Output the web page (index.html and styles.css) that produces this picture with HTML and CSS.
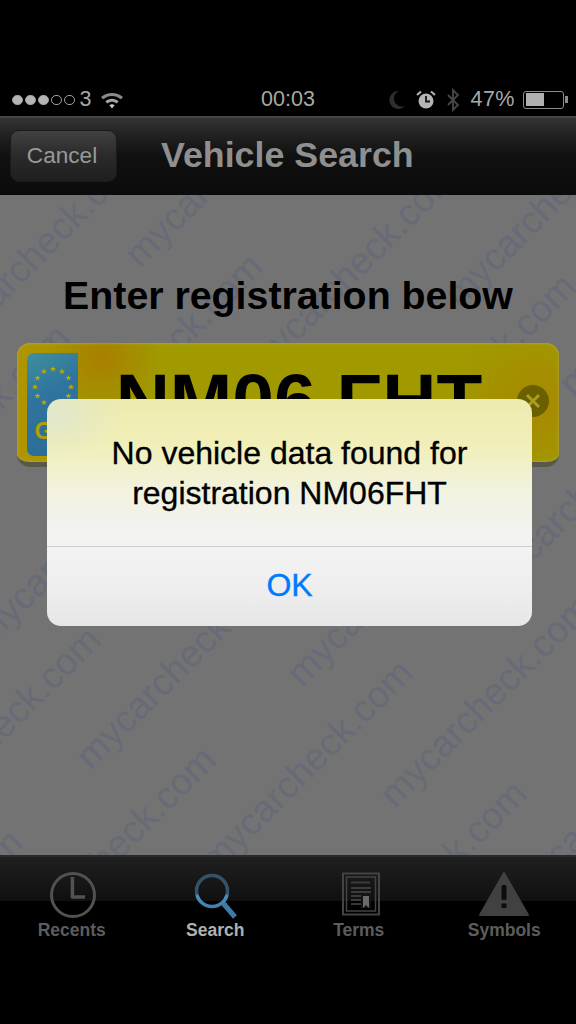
FILE: index.html
```html
<!DOCTYPE html>
<html lang="en">
<head>
<meta charset="utf-8">
<title>Vehicle Search</title>
<link rel="stylesheet" href="styles.css">
</head>
<body>
<div class="screen">
  <div class="topgap"></div>
  <div class="status">
    <div class="status-left">
      <span class="sig"><i class="dot on"></i><i class="dot on"></i><i class="dot on"></i><i class="dot"></i><i class="dot"></i></span>
      <span class="carrier">3</span>
      <svg class="wifi" width="22" height="18" viewBox="0 0 22 18"><path d="M0 6C6 .5 16 .5 22 6L19.800 8.300C14.800 3.800 7.200 3.800 2.200 8.300Z" fill="#8a8a8a"/><path d="M4.300 10.300C8.200 6.900 13.800 6.900 17.700 10.300L15.600 12.500C12.800 10.200 9.200 10.200 6.400 12.500Z" fill="#a5a5a5"/><path d="M8.400 14.300C10 13 12 13 13.600 14.300L11 17.500Z" fill="#c8c8c8"/></svg>
    </div>
    <div class="time">00:03</div>
    <div class="status-right">
      <svg width="18" height="20" viewBox="0 0 18 20"><path d="M11 1A9 9 0 1 0 17 16A8 8 0 0 1 11 1Z" fill="#2e2e2e"/></svg>
      <svg class="alarm" width="20" height="20" viewBox="0 0 20 20"><circle cx="10" cy="11" r="7.500" fill="#b5b5b5"/><path d="M10 6V11.500H14" fill="none" stroke="#111" stroke-width="1.800"/><path d="M1 5L5 1.500M19 5L15 1.500" stroke="#b5b5b5" stroke-width="2"/></svg>
      <svg class="bt" width="14" height="24" viewBox="0 0 14 24"><path d="M2 7L12 17L7 22V2L12 7L2 17" fill="none" stroke="#474747" stroke-width="1.800"/></svg>
      <span class="pct">47%</span>
      <span class="battery"><span class="battery-fill"></span></span>
    </div>
  </div>
  <div class="nav">
    <button class="cancel">Cancel</button>
    <h1 class="title">Vehicle Search</h1>
  </div>
  <main class="content">
    <svg class="watermark" width="576" height="660" viewBox="0 195 576 660">
      <g class="wm">
        <text transform="translate(147 159) rotate(-45)">mycarcheck.com</text>
        <text transform="translate(265 269) rotate(-45)">mycarcheck.com</text>
        <text transform="translate(383 379) rotate(-45)">mycarcheck.com</text>
        <text transform="translate(501 489) rotate(-45)">mycarcheck.com</text>
        <text transform="translate(594 610) rotate(-45)">mycarcheck.com</text>
        <text transform="translate(339 70) rotate(-45)">mycarcheck.com</text>
        <text transform="translate(460 179) rotate(-45)">mycarcheck.com</text>
        <text transform="translate(578 289) rotate(-45)">mycarcheck.com</text>
        <text transform="translate(696 399) rotate(-45)">mycarcheck.com</text>
        <text transform="translate(659 110) rotate(-45)">mycarcheck.com</text>
        <text transform="translate(773 199) rotate(-45)">mycarcheck.com</text>
        <text transform="translate(72 340) rotate(-45)">mycarcheck.com</text>
        <text transform="translate(188 449) rotate(-45)">mycarcheck.com</text>
        <text transform="translate(290 572) rotate(-45)">mycarcheck.com</text>
        <text transform="translate(415 675) rotate(-45)">mycarcheck.com</text>
        <text transform="translate(529 796) rotate(-45)">mycarcheck.com</text>
        <text transform="translate(724 706) rotate(-45)">mycarcheck.com</text>
        <text transform="translate(103 642) rotate(-45)">mycarcheck.com</text>
        <text transform="translate(218 762) rotate(-45)">mycarcheck.com</text>
        <text transform="translate(25 845) rotate(-45)">mycarcheck.com</text>
      </g>
    </svg>
    <h2 class="prompt">Enter registration below</h2>
    <div class="plate">
      <div class="strip">
        <svg class="stars" width="44" height="44" viewBox="0 0 44 44">
          <defs><polygon id="st" points="0,-3 .9,-.9 3,-.9 1.300,.4 1.900,2.600 0,1.300 -1.900,2.600 -1.300,.4 -3,-.9 -.9,-.9"/></defs>
          <g fill="#b9a900">
            <use href="#st" x="22" y="4"/><use href="#st" x="31" y="6.500"/><use href="#st" x="37.500" y="13"/><use href="#st" x="40" y="22"/><use href="#st" x="37.500" y="31"/><use href="#st" x="31" y="37.500"/><use href="#st" x="22" y="40"/><use href="#st" x="13" y="37.500"/><use href="#st" x="6.500" y="31"/><use href="#st" x="4" y="22"/><use href="#st" x="6.500" y="13"/><use href="#st" x="13" y="6.500"/>
          </g>
        </svg>
        <span class="gb">GB</span>
      </div>
      <div class="plate-text">NM06 FHT</div>
      <svg class="clear" width="32" height="32" viewBox="0 0 32 32"><circle cx="16" cy="16" r="16" fill="#6b6000"/><path d="M10 10L22 22M22 10L10 22" stroke="#a89f1c" stroke-width="3"/></svg>
    </div>
  </main>
  <nav class="tabs">
    <div class="tab">
      <svg class="ico-clock" width="50" height="50" viewBox="0 0 50 50"><circle cx="25" cy="25" r="21.500" fill="none" stroke="#525252" stroke-width="3"/><path d="M24.400 7V27H37" fill="none" stroke="#525252" stroke-width="3.500" stroke-linejoin="round"/></svg>
      <span>Recents</span>
    </div>
    <div class="tab active">
      <svg width="50" height="50" viewBox="0 0 50 50"><defs><linearGradient id="sg" gradientUnits="userSpaceOnUse" x1="0" y1="3" x2="0" y2="40"><stop offset="0" stop-color="#33536a"/><stop offset=".55" stop-color="#33536a"/><stop offset=".62" stop-color="#4a90c2"/><stop offset="1" stop-color="#3d7ba6"/></linearGradient></defs><circle cx="22" cy="21" r="15.500" fill="none" stroke="url(#sg)" stroke-width="3.500"/><path d="M33 33L45 47" stroke="#3d7ba6" stroke-width="5"/></svg>
      <span>Search</span>
    </div>
    <div class="tab">
      <svg width="50" height="50" viewBox="0 0 50 50"><g fill="none" stroke="#434343"><rect x="9" y="3.500" width="36" height="41" stroke-width="2"/><rect x="12.500" y="7" width="29" height="34" stroke-width="1.500"/></g><path d="M17 12.500H36" stroke="#3a3a3a" stroke-width="2"/><path d="M17 18H37M17 22H37M17 26H29M17 30H28M17 34H28" stroke="#4a4a4a" stroke-width="1.500"/><path d="M27 24H37V38H27Z" fill="#141414"/><path d="M29 26H35V38L32 35L29 38Z" fill="#6a6a6a"/></svg>
      <span>Terms</span>
    </div>
    <div class="tab tab-last">
      <svg width="52" height="50" viewBox="0 0 52 50"><path d="M26 3L50 45H2Z" fill="#414141" stroke="#414141" stroke-linejoin="round" stroke-width="2"/><rect x="23.500" y="15" width="5" height="15" rx="1.500" fill="#0c0c0c"/><rect x="23.500" y="33.500" width="5" height="4.500" fill="#0c0c0c"/></svg>
      <span>Symbols</span>
    </div>
  </nav>
  <div class="alert">
    <div class="alert-msg">No vehicle data found for<br>registration NM06FHT</div>
    <div class="alert-btn">OK</div>
  </div>
</div>
</body>
</html>
```
FILE: styles.css
```css
* { box-sizing: border-box; }
html, body { margin: 0; padding: 0; background: #000; }
.screen {
  position: relative;
  width: 576px;
  height: 1024px;
  overflow: hidden;
  display: flex;
  flex-direction: column;
  font-family: "Liberation Sans", Arial, sans-serif;
}
.topgap { height: 83px; background: #000; }
.status {
  height: 33px;
  background: #000;
  color: #a8a8a8;
  font-size: 21.500px;
  display: grid;
  grid-template-columns: 1fr auto 1fr;
  align-items: center;
  padding: 0 12px 0 12px;
}
.status-left { display: flex; align-items: center; gap: 5px; }
.sig { display: flex; gap: 2.500px; margin-top: 1px; }
.dot { width: 10.500px; height: 10.500px; border-radius: 50%; border: 1px solid #a0a0a0; }
.dot.on { background: #b5b5b5; }
.wifi { margin-left: 5px; }
.time { text-align: center; }
.status-right { display: flex; align-items: center; justify-content: flex-end; gap: 8px; }
.alarm { margin-left: 2px; }
.bt { margin: 0 2px; }
.pct { letter-spacing: .5px; }
.battery {
  display: block;
  position: relative;
  width: 41px;
  height: 18px;
  border: 1.500px solid #8c8c8c;
  border-radius: 3px;
  padding: 1.500px;
}
.battery::after {
  content: "";
  position: absolute;
  right: -5px;
  top: 4px;
  width: 3px;
  height: 7px;
  background: #8c8c8c;
}
.battery-fill { display: block; width: 18px; height: 100%; background: #b0b0b0; }
.nav {
  height: 79px;
  display: flex;
  align-items: center;
  padding: 0 0 0 10px;
  gap: 44px;
  border-top: 2px solid #444;
  background: linear-gradient(#333 0, #1c1c1c 30%, #101010 50%, #0b0b0b 100%);
}
.cancel {
  width: 107px;
  height: 52px;
  margin-top: -1px;
  padding: 0 3px 1px 0;
  border: 1px solid #1b1b1b;
  border-radius: 9px;
  background: linear-gradient(#414141, #2a2a2a 50%, #1f1f1f);
  color: #999;
  font: 22.600px "Liberation Sans", Arial, sans-serif;
}
.title { margin: -3px 0 0; font-size: 35.800px; font-weight: 700; color: #8f8f8f; }
.content {
  position: relative;
  flex: 1;
  background: #737373;
  overflow: hidden;
}
.watermark { position: absolute; left: 0; top: 0; filter: blur(.5px); }
.wm text {
  font-family: "Liberation Sans", Arial, sans-serif;
  font-size: 37.500px;
  text-anchor: end;
  fill: #666b77;
}
.prompt {
  position: relative;
  margin: 77px 0 25px;
  text-align: center;
  font-size: 39.300px;
  line-height: 46px;
  font-weight: 700;
  color: #000;
}
.plate {
  position: relative;
  margin: 0 17px;
  height: 124px;
  padding: 10px 10px 8px 10px;
  display: flex;
  align-items: center;
  border-radius: 13px;
  border-bottom: 5px solid #5a5848;
  box-shadow: inset 0 0 3px #b8b15c;
  background:
    radial-gradient(ellipse 60px 60px at 85px 15px, #a97f00, transparent),
    radial-gradient(ellipse 90px 80px at 520px 60px, #a88800, transparent),
    linear-gradient(90deg, #b09400 0, #a09a00 14%);
}
.strip {
  align-self: flex-start;
  width: 51px;
  height: 103px;
  flex: none;
  display: flex;
  flex-direction: column;
  align-items: center;
  padding-top: 12px;
  border-radius: 7px 0 0 7px;
  background: linear-gradient(150deg, #3f8f9c, #2f73a0 40%, #2a6c95);
}
.stars { display: block; flex: none; }
.gb { margin-top: 7px; font-size: 24px; font-weight: 700; color: #b3a000; line-height: 30px; }
.plate-text {
  flex: 1;
  text-align: center;
  padding: 0 23px 8px 0;
  font-size: 75px;
  line-height: 80px;
  font-weight: 700;
  color: #000;
  white-space: nowrap;
}
.clear { flex: none; margin: 0 0 6px -26px; }
.tabs {
  height: 169px;
  display: grid;
  grid-template-columns: repeat(4, 1fr);
  align-items: start;
  padding: 13px 2px 0 0;
  border-top: 2px solid #2a2a2a;
  background: linear-gradient(#1f1f1f 0, #101010 44px, #000 44px);
}
.tab {
  display: flex;
  flex-direction: column;
  align-items: center;
  gap: 0;
  color: #5c5c5c;
  font-size: 17.500px;
  font-weight: 700;
}
.tab-last { padding-left: 4px; }
.ico-clock { margin-left: 3px; }
.tab.active { color: #b0b0b0; }
.alert {
  position: absolute;
  left: 47px;
  top: 399px;
  width: 485px;
  height: 227px;
  border-radius: 14px;
  overflow: hidden;
  background:
    radial-gradient(ellipse 70px 50px at 5px 15px, #e0e7cc, transparent),
    linear-gradient(#ecebae 0, #f1efb8 45px, #f2f2dd 90px, #f2f2ee 125px, #f3f3f3 147px, #eeeeee 190px, #e6e6e6 227px);
  color: #000;
}
.alert-msg {
  height: 148px;
  padding-top: 34px;
  text-align: center;
  font-size: 32px;
  line-height: 40px;
  -webkit-text-stroke: .35px #000;
  border-bottom: 1.500px solid #cfcfcf;
}
.alert-btn {
  text-align: center;
  font-size: 32px;
  line-height: 76px;
  color: #007aff;
  -webkit-text-stroke: .35px #007aff;
}
```
